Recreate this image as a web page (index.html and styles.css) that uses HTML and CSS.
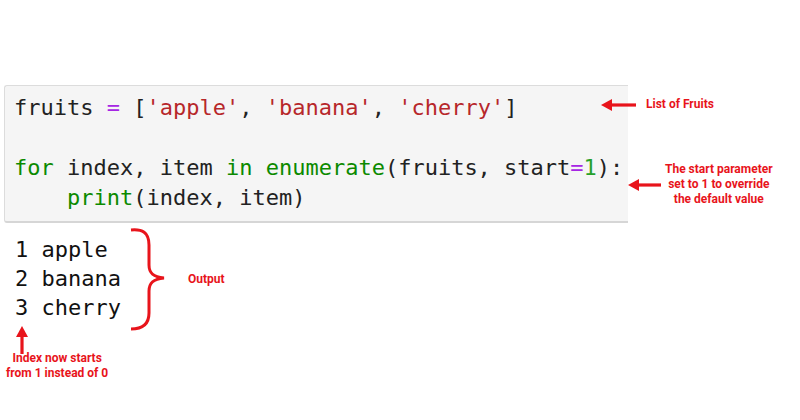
FILE: index.html
```html
<!DOCTYPE html>
<html>
<head>
<meta charset="utf-8">
<link rel="stylesheet" href="styles.css">
</head>
<body>
<div class="canvas">
  <div class="cell">
    <div class="code">
      <div class="line"><span class="n">fruits</span> <span class="o">=</span> [<span class="s">'apple'</span>, <span class="s">'banana'</span>, <span class="s">'cherry'</span>]</div>
      <div class="line blank"></div>
      <div class="line"><span class="k">for</span> index, item <span class="k">in</span> <span class="k">enumerate</span>(fruits, start<span class="o">=</span><span class="m">1</span>):</div>
      <div class="line">    <span class="k">print</span>(index, item)</div>
    </div>
  </div>
  <div class="output">
    <div class="line">1 apple</div>
    <div class="line">2 banana</div>
    <div class="line">3 cherry</div>
  </div>

  <div class="note note-list">
    <svg class="arrow-left" width="40" height="14" viewBox="0 0 40 14"><path d="M10 7H36" stroke="#e8141b" stroke-width="3.2"/><path d="M1 7L12 1V13Z" fill="#e8141b"/></svg>
    <span>List of Fruits</span>
  </div>

  <div class="note note-start">
    <svg class="arrow-left" width="36" height="14" viewBox="0 0 36 14"><path d="M10 7H34" stroke="#e8141b" stroke-width="3.2"/><path d="M1 7L12 1V13Z" fill="#e8141b"/></svg>
    <span class="multi">The start parameter<br>set to 1 to override<br>the default value</span>
  </div>

  <div class="note note-output">
    <svg width="40" height="106" viewBox="0 0 40 106"><path d="M3 3C14 2 21 5 21 18V38C21 46 25 50 36 51C25 52 21 56 21 64V86C21 98 14 102 3 102" fill="none" stroke="#e8141b" stroke-width="3"/></svg>
    <span>Output</span>
  </div>

  <div class="note note-index">
    <svg width="16" height="30" viewBox="0 0 16 30"><path d="M8 10V29" stroke="#e8141b" stroke-width="3.2"/><path d="M8 1L14 12H2Z" fill="#e8141b"/></svg>
    <span class="multi">Index now starts<br>from 1 instead of 0</span>
  </div>
</div>
</body>
</html>
```
FILE: styles.css
```css
html, body {
  margin: 0;
  padding: 0;
  background: #ffffff;
}
.canvas {
  position: relative;
  width: 800px;
  height: 420px;
  padding-top: 85px;
  box-sizing: border-box;
}
.cell {
  margin-left: 4px;
  width: 624px;
  background: #f5f5f5;
  border: 1px solid #dcdcdc;
  border-right: none;
  border-bottom: 2px solid #d6d6d6;
  border-radius: 3px 0 0 3px;
  box-sizing: border-box;
}
.code, .output {
  font-family: "DejaVu Sans Mono", "Liberation Mono", monospace;
  font-size: 22px;
  margin: 0;
  color: #222222;
}
.line { white-space: pre; }
.code {
  line-height: 30px;
  padding: 7px 0 8px 9px;
}
.line.blank { height: 30px; }
.output {
  line-height: 29px;
  margin-top: 12px;
  padding-left: 15px;
  color: #111111;
}
.k { color: #0b8a00; }
.s { color: #b7272a; }
.o { color: #a626e4; }
.m { color: #26a02a; }
.n { color: #222222; }

.note {
  position: absolute;
  display: flex;
  align-items: center;
  font-family: Roboto, "Liberation Sans", sans-serif;
  font-weight: 700;
  font-size: 12px;
  color: #e8141b;
  line-height: 15px;
}
.note svg { display: block; flex: none; }
.multi { text-align: center; }
.note-list {
  left: 600px;
  top: 97px;
  gap: 6px;
}
.note-start {
  left: 627px;
  top: 162px;
  gap: 2px;
}
.note-output {
  left: 128px;
  top: 227px;
  gap: 20px;
}
.note-output span { margin-top: -2px; }
.note-index {
  left: 6px;
  top: 325px;
  flex-direction: column;
  align-items: center;
  gap: 0;
}
.note-index span { margin-top: -4px; }
.note-index svg { align-self: flex-start; margin-left: 8px; }
```
